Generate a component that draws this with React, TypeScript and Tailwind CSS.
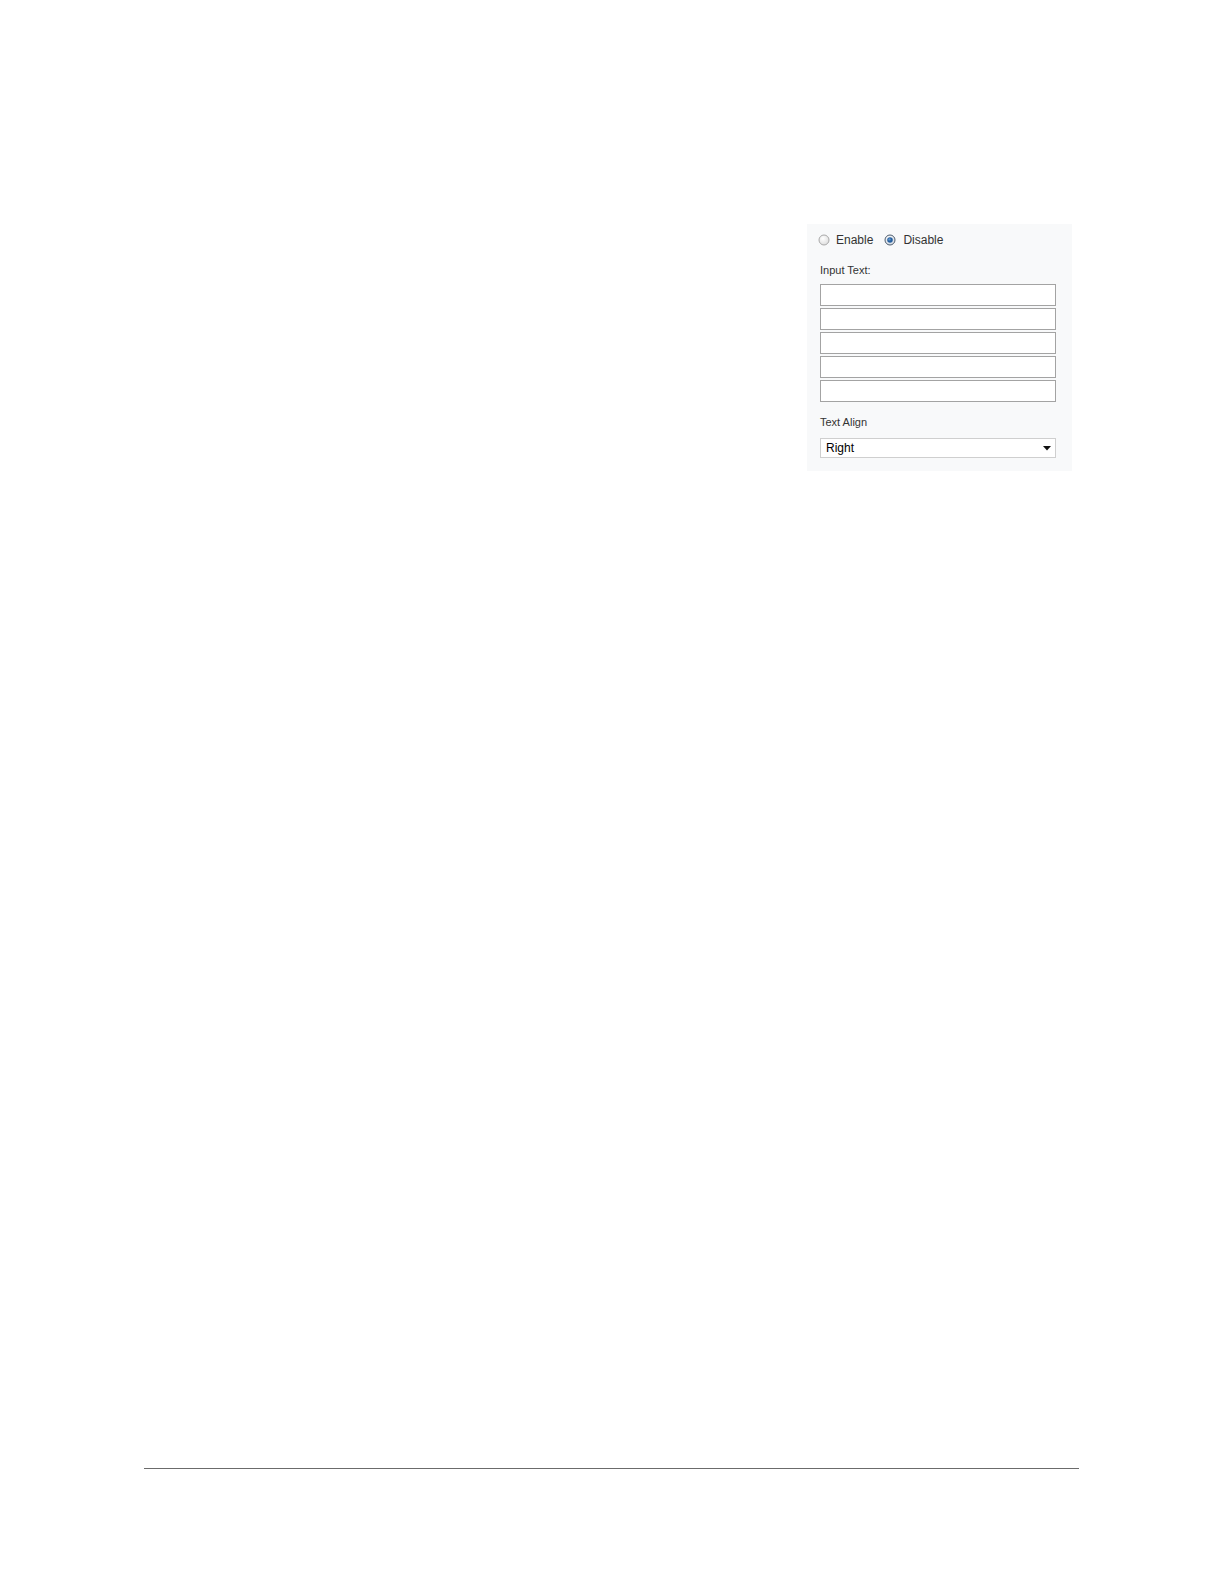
function Radio({ checked }: { checked?: boolean }) {
  return (
    <svg width="12" height="12" viewBox="0 0 12 12" className="shrink-0">
      <defs>
        <radialGradient id={checked ? "rg-on" : "rg-off"} cx="0.4" cy="0.35" r="0.7">
          <stop offset="0" stopColor="#ffffff" />
          <stop offset="1" stopColor={checked ? "#cfd6df" : "#dcdcdc"} />
        </radialGradient>
      </defs>
      <circle
        cx="6"
        cy="6"
        r="5"
        fill={`url(#${checked ? "rg-on" : "rg-off"})`}
        stroke={checked ? "#4e5d6e" : "#a9a9a9"}
        strokeWidth="1"
      />
      {checked && (
        <>
          <circle cx="6" cy="6" r="2.8" fill="#27609f" />
          <circle cx="5.5" cy="5.4" r="1.2" fill="#5f95d0" />
        </>
      )}
    </svg>
  );
}

function TextBox() {
  return <div className="h-[22px] w-[236px] border border-[#a3a3a3] bg-white" />;
}

export default function App() {
  return (
    <div className="flex h-[1584px] w-[1224px] flex-col bg-white font-['Liberation_Sans',Arial,sans-serif]">
      <div className="ml-[807px] mt-[224px] w-[265px] bg-[#f8f9fa] pb-[13px] pl-[11px]">
        <div className="mt-[9px] flex h-[14px] items-center text-[12px] leading-[14px] text-[#333]">
          <Radio />
          <span className="ml-[6px]">Enable</span>
          <span className="ml-[11px]">
            <Radio checked />
          </span>
          <span className="ml-[7px]">Disable</span>
        </div>
        <div className="pl-[2px]">
          <div className="mt-[17px] text-[11px] leading-[13px] text-[#333]">Input Text:</div>
          <div className="mt-[7px] flex flex-col gap-[2px]">
            <TextBox />
            <TextBox />
            <TextBox />
            <TextBox />
            <TextBox />
          </div>
          <div className="mt-[14px] text-[11px] leading-[13px] text-[#333]">Text Align</div>
          <div className="mt-[9px] flex h-[20px] w-[236px] items-center justify-between border border-[#cfcfcf] bg-white pl-[5px] pr-[4px] text-[12px] text-black">
            <span>Right</span>
            <svg width="8" height="5" viewBox="0 0 8 5">
              <path d="M0 0 L8 0 L4 4.5 Z" fill="#111" />
            </svg>
          </div>
        </div>
      </div>
      <div className="mb-[115px] ml-[144px] mt-auto h-px w-[935px] bg-[#6b6b6b]" />
    </div>
  );
}
